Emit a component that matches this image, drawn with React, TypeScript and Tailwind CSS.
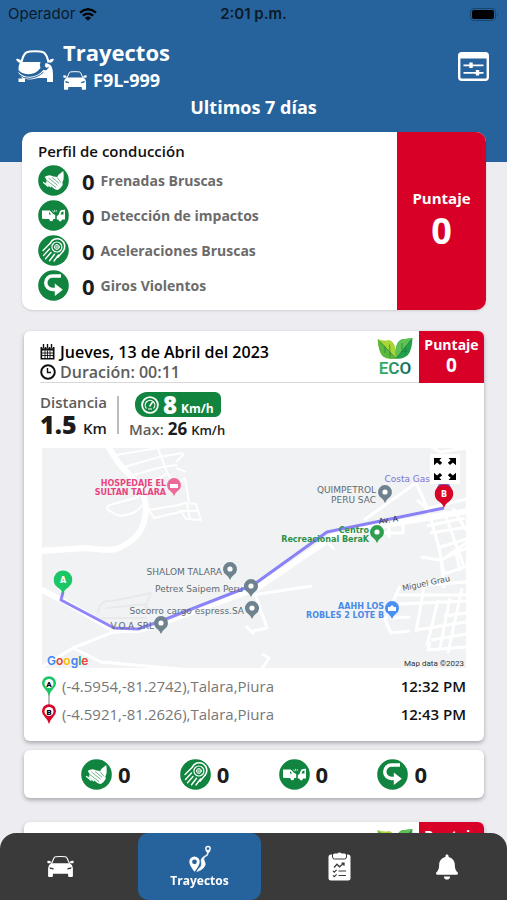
import { type ReactNode, useId } from "react";
import { FaBell } from "react-icons/fa";

type EventKind = "brake" | "impact" | "acceleration" | "turn";

type Trip = {
  id: number;
  date: string;
  duration: string;
  score: number;
  distance: string;
  speed: number;
  maxSpeed: number;
  from: { place: string; time: string };
  to: { place: string; time: string };
  events: { kind: EventKind; count: number }[];
};

const PROFILE: { kind: EventKind; label: string; count: number }[] = [
  { kind: "brake", label: "Frenadas Bruscas", count: 0 },
  { kind: "impact", label: "Detección de impactos", count: 0 },
  { kind: "acceleration", label: "Aceleraciones Bruscas", count: 0 },
  { kind: "turn", label: "Giros Violentos", count: 0 },
];

const LAST_TRIP: Trip = {
  id: 1,
  date: "Jueves, 13 de Abril del 2023",
  duration: "00:11",
  score: 0,
  distance: "1.5",
  speed: 8,
  maxSpeed: 26,
  from: { place: "(-4.5954,-81.2742),Talara,Piura", time: "12:32 PM" },
  to: { place: "(-4.5921,-81.2626),Talara,Piura", time: "12:43 PM" },
  events: [
    { kind: "brake", count: 0 },
    { kind: "acceleration", count: 0 },
    { kind: "impact", count: 0 },
    { kind: "turn", count: 0 },
  ],
};

const TRIPS: Trip[] = [LAST_TRIP, { ...LAST_TRIP, id: 2 }];

function CarIcon({ className }: { className: string }) {
  return (
    <svg viewBox="0 0 27 21" className={className} fill="currentColor" aria-hidden="true">
      <path d="M4.4 7.800 7 2Q7.500.9 8.700.8q4.800-.5 9.600 0 1.200.1 1.700 1.200l2.600 5.800" fill="none" stroke="currentColor" strokeWidth="1.100" />
      <path d="M.2 5q2-.8 4 .7l-.8 1.600H.7zM26.800 5q-2-.8-4 .7l.8 1.600h2.700z" />
      <path
        fillRule="evenodd"
        d="M4 7.200h19q2.600 1.500 2.900 4.700v8.200q0 .8-.8.8h-3.200q-.8 0-.8-.8v-2.300H5.900v2.300q0 .8-.8.800H1.900q-.8 0-.8-.8v-8.200q.3-3.200 2.900-4.700zM2.400 11.200l.7 1.900 4 .5-1-1.700zM24.600 11.200l-.7 1.900-4 .5 1-1.700z"
      />
    </svg>
  );
}

function LogoIcon() {
  return (
    <svg viewBox="0 0 38 34" className="h-[34px] w-[38px] shrink-0" aria-hidden="true">
      <path d="M5.500 13.500Q7 6 10 3.600 13 2.200 19 2.200t9 1.400q3 2.400 4.500 9.900" fill="none" stroke="#fff" strokeWidth="2" />
      <path d="M0 10q2.500-1 5 1.200L4.500 14Q1 13.500 0 10zM38 10q-2.500-1-5 1.200l.5 2.800q3.500-.5 4.500-4z" fill="#fff" />
      <path d="M4 13h20.500q-1.500 3.500 0 6-5 6.500-12.500 6.200-6.500-.3-9.500-4.200 0-5 1.500-8z" fill="#fff" />
      <path d="M1.800 22.500q5 5.500 12 5.300 8-.2 13.500-6.800l3 .3 3-3.300-3 .7-1.600-1.700.8-3q4.500.5 6 3.500 1.500 3 1.500 8v7.500h-6v-4h-9q-7 2.500-13 .8v3.200H2.500v-3.500l4-.1Q3.500 26.500 1.800 22.500z" fill="#fff" />
      <path d="M2 25q5.500 5 12 4.300 8-.8 13.500-6.300" fill="none" stroke="#26639c" strokeWidth="1" />
    </svg>
  );
}

function FilterIcon() {
  return (
    <svg viewBox="0 0 31 29" className="h-[29px] w-[31px]" fill="none" stroke="#fff" aria-hidden="true">
      <rect x="1.200" y="1.200" width="28.600" height="26.600" rx="2.500" strokeWidth="2.400" />
      <path d="M1.500 4h28" strokeWidth="5" />
      <path d="M5.500 13.300h20M5.500 20.800h20" strokeWidth="1.800" />
      <path d="M13 10.500v5.600M19.500 18v5.600" strokeWidth="3.400" />
    </svg>
  );
}

const EVENT_DRAWINGS: Record<EventKind, ReactNode> = {
  brake: (
    <g>
      <path d="M6.800 11.800q2-1.500 5-1.600l4 1.300 3.500.4 1-2 5-4q.6 3.500.3 7.500-.3 2.500-1.200 3.500l.3 3q-1.700 3-4.800 5.200l-3.200-.8-8-6.500q-.7-2-.4-3z" fill="#fff" />
      <path d="M7.500 14.500l10.500 8M10.500 13l9 7.200M14 12.500l7 5.700M19 12.500l4 5" stroke="#11853f" strokeWidth=".6" />
      <path d="M5.500 17.500l4.500 3.800M8.200 18l4.500 3.800" stroke="#fff" strokeWidth="1.200" strokeLinecap="round" />
    </g>
  ),
  impact: (
    <g fill="#fff">
      <path fillRule="evenodd" d="M4 10.500h7.800l3.400 3.600 2 1v4h-1.800a2.200 2.200 0 0 1-4.300 0H8.500L4 18.800zM11 12v2.500h2.300z" />
      <path fillRule="evenodd" d="M27 9.700q-4.500-.3-5.400 2.300l-1 2.700-1.800 1.500v3.200h1.500a1.900 1.900 0 0 0 3.700 0h3zM25.500 11.500v3h-3l.8-2q.7-1.100 2.200-1z" />
      <circle cx="13.300" cy="19.700" r="1.600" />
      <circle cx="22.200" cy="20" r="1.400" />
      <path d="M14.500 10.700l1 1.600M16.600 9.800v2M18.600 10.300l-.6 1.500" stroke="#fff" strokeWidth=".8" />
    </g>
  ),
  acceleration: (
    <g fill="none" stroke="#fff" strokeLinecap="round">
      <path d="M12.200 8.300A7.600 7.600 0 1 1 25 16.200" strokeWidth="1.600" />
      <circle cx="18.900" cy="12" r="5" strokeWidth="1.200" />
      <circle cx="18.900" cy="12" r="2.400" strokeWidth="1" />
      <path d="M18.900 9.500v5M16.400 12h5" strokeWidth=".7" />
      <path d="M12 8.500L5 15.500M11.500 14l-6 6.500M13 17.500l-5.500 6.200M16.500 19.200l-5 6.500M20.500 20l-4.500 6M25 16.200l-5 6" strokeWidth="1.400" />
    </g>
  ),
  turn: (
    <g>
      <path d="M23 6H14.500a6.600 6.600 0 0 0 0 13.500H18" fill="none" stroke="#fff" strokeWidth="3.500" />
      <path d="M16.800 13.500l8 6.300-8 6.300z" fill="#fff" />
    </g>
  ),
};

function EventIcon({ kind }: { kind: EventKind }) {
  return (
    <svg viewBox="0 0 31 31" className="size-[31px] shrink-0" aria-hidden="true">
      <circle cx="15.500" cy="15.500" r="15.300" fill="#11853f" />
      {EVENT_DRAWINGS[kind]}
    </svg>
  );
}

function EcoBadge() {
  const gradient = useId();
  return (
    <svg viewBox="0 0 36 40" className="h-10 w-9 shrink-0" role="img" aria-label="ECO">
      <defs>
        <linearGradient id={gradient} x1="0" x2="1">
          <stop offset="0" stopColor="#39b56a" />
          <stop offset="1" stopColor="#0f6a58" />
        </linearGradient>
      </defs>
      <path d="M.7 2Q7 4.500 12 3q8 2.500 7 18.500Q11 23.500 5.500 19 1.500 14.500.7 2z" fill="#a9d636" />
      <path d="M.7 2Q1.500 14.500 5.500 19 11 23.500 19 21.500z" fill="#5cb83c" />
      <path d="M35.500 1Q30 2 25 2.300 17 5.500 19 21.500q7 1 12-3.500Q35 13 35.500 1z" fill="#22a04c" />
      <path d="M35.500 1Q30 2 25 2.300 17 5.500 19 21.500z" fill="#5fc053" />
      <path d="M3 4.500l16 17L34 3M8 9.500V16M13 14.800v5M13 14.500l-.5-7M28.500 9.500l-.5 8M24 14.500l7-.5M25 13V6" fill="none" stroke="#1b7a3d" strokeWidth=".7" />
      <text x="18" y="37" textAnchor="middle" fontFamily="Roboto, sans-serif" fontSize="17" fontWeight="600" fill={`url(#${gradient})`}>
        ECO
      </text>
    </svg>
  );
}

function CalendarIcon() {
  return (
    <svg viewBox="0 0 15 16" className="h-4 w-[15px]" aria-hidden="true">
      <path d="M.5 3h14v12.500H.5z" fill="#111" />
      <path d="M3.500.3v4M7.500.3v4M11.500.3v4" stroke="#fff" strokeWidth="2.600" />
      <path d="M3.500 0v4M7.500 0v4M11.500 0v4" stroke="#111" strokeWidth="1.400" />
      <path d="M2.200 6.500h10.600v7.500H2.200z" fill="#fff" />
      <path d="M2 9h11M2 11.500h11M5 6.500V14M7.500 6.500V14M10 6.500V14" stroke="#111" strokeWidth=".9" />
    </svg>
  );
}

function ClockIcon() {
  return (
    <svg viewBox="0 0 16 16" className="size-4" fill="none" stroke="#111" aria-hidden="true">
      <circle cx="8" cy="8" r="6.800" strokeWidth="2" />
      <path d="M7.500 4v4.500h3.500" strokeWidth="1.400" />
    </svg>
  );
}

function GaugeIcon() {
  return (
    <svg viewBox="0 0 18 18" className="size-[18px]" fill="none" stroke="#fff" aria-hidden="true">
      <circle cx="9" cy="9" r="7.900" strokeWidth="1.800" />
      <path d="M5.500 12.500a4.800 4.800 0 1 1 7 0" strokeWidth="1.200" />
      <path d="M8.500 10.500l3-4.500" strokeWidth="1.500" />
      <path d="M7 13h4" strokeWidth="1.200" />
    </svg>
  );
}

function RouteIcon() {
  return (
    <svg viewBox="0 0 24 28" className="h-7 w-6" aria-hidden="true">
      <path fillRule="evenodd" d="M6.500 11.500a5.200 5.200 0 0 1 5.200 5.200q0 3.500-5.200 10-5.200-6.500-5.200-10a5.200 5.200 0 0 1 5.200-5.200zm0 2.900a2.400 2.400 0 1 0 0 4.800 2.400 2.400 0 0 0 0-4.800z" fill="#fff" />
      <path fillRule="evenodd" d="M20 .8a2.900 2.900 0 0 1 2.900 2.900Q22.900 5.700 20 9q-2.900-3.300-2.900-5.300A2.900 2.900 0 0 1 20 .8zm0 1.500a1.400 1.400 0 1 0 0 2.800 1.400 1.400 0 0 0 0-2.800z" fill="#fff" />
      <path d="M20 8.500q.2 2-2.200 3-3.300 1.700-1.500 4.500 2.500 3.600-1 7-2.500 2.600-6.500 3.600l1.800-2.800q3.700-2.600 2.900-5.800-1.500-4.500 2.600-6.600Q19.200 10 19.200 8.500z" fill="#fff" stroke="#fff" strokeWidth=".6" />
    </svg>
  );
}

function ReportIcon() {
  return (
    <svg viewBox="0 0 23 29" className="h-[29px] w-[23px]" aria-hidden="true">
      <rect x=".5" y="2.500" width="22" height="26" rx="2.500" fill="#fff" />
      <path d="M4.500 2v3q0 2 2 2h10q2 0 2-2V2z" fill="#fff" stroke="#3a3a3a" strokeWidth="1" />
      <path d="M5 3.200q0-1.700 1.700-1.700h2.600q2.200-2 4.400 0h2.600q1.700 0 1.700 1.700v1.600H5z" fill="#fff" />
      <path d="M6 15.500l3-3.200 2.500 2.500 4-3.300M13.500 11.200h2.500v2.500" fill="none" stroke="#3a3a3a" strokeWidth="1.300" />
      <path d="M10.500 19h7.500M10.500 23.500h7.500M5 18.800l1.300 1.300 2.300-2.300M5 23.300l1.300 1.300 2.300-2.300" fill="none" stroke="#3a3a3a" strokeWidth="1.200" />
    </svg>
  );
}

function StatusBar() {
  return (
    <div className="grid h-7 grid-cols-3 items-center px-2 font-['Inter',sans-serif] text-[15px] leading-5 text-[#0b1a28]">
      <div className="flex items-center gap-1">
        <span>Operador</span>
        <svg viewBox="0 0 18 13" className="h-[13px] w-[18px]" fill="none" stroke="#000" aria-hidden="true">
          <path d="M1 4.600q8-6.800 16 0" strokeWidth="2.300" />
          <path d="M3.800 7.700q5.200-4.300 10.400 0" strokeWidth="2.200" />
          <path d="M9 12.800L5.900 9.700q3.100-2.400 6.200 0z" fill="#000" stroke="none" />
        </svg>
      </div>
      <span className="text-center font-semibold">2:01 p.m.</span>
      <svg viewBox="0 0 29 13" className="h-[13px] w-[29px] justify-self-end" aria-hidden="true">
        <rect x=".5" y=".5" width="25" height="12" rx="3.500" fill="none" stroke="#1a456d" />
        <rect x="2" y="2" width="22" height="9" rx="2" fill="#000" />
        <path d="M27 4.500q1.500 2 0 4z" fill="#1a456d" />
      </svg>
    </div>
  );
}

function MapPin({ x, y, color, glyph }: { x: number; y: number; color: string; glyph?: ReactNode }) {
  return (
    <g>
      <path d={`M${x} ${y + 10}q-1-3-4-5.200a7 7 0 1 1 8 0q-3 2.200-4 5.200z`} fill={color} />
      {glyph ?? <circle cx={x} cy={y - 1} r="2.600" fill="#fff" />}
    </g>
  );
}

function EndPin({ x, y, color, letter }: { x: number; y: number; color: string; letter: string }) {
  return (
    <g>
      <path d={`M${x} ${y + 13}q-1-4-5.500-6.800a9.300 9.300 0 1 1 11 0q-4.500 2.800-5.500 6.800z`} fill={color} />
      <text x={x} y={y + 2} textAnchor="middle" fontSize="8" fontWeight="700" fill="#fff">
        {letter}
      </text>
    </g>
  );
}

function RouteMap() {
  return (
    <div className="relative h-[220px] overflow-hidden bg-[#f0f2f3]">
      <svg viewBox="0 0 424 220" preserveAspectRatio="xMidYMid slice" className="h-full w-full" fontFamily="'DejaVu Sans', sans-serif" fontSize="8">
        <g fill="none" stroke="#fff" strokeLinejoin="round">
          <path d="M66-2q8 14 13 20 12 12 18 20 6 10 7 22 0 16-8 26-8 10-22 15-8 2-30-1l-46 3" strokeWidth="6" />
          <path d="M-2 141l22 11 52 30h24l24-7 95-35 80-54 48-9 83-14" strokeWidth="6" />
          <path d="M0 219l31-19 38-15 28-3M31 200l28 14 90 8" strokeWidth="3" />
          <path d="M74 7l48-8M79 20l38-11 24-4M88 28l32-9 15-2M96 39l23-10 6-4M115-2l10 26 8 14M142 6l-8 8M134 20l10 4" strokeWidth="2" />
          <path d="M97 49l-26 7q-8 2-5 6l9 5q6 2 18-3l8-7M107 62l30-5 6-2 11 1 5 16-15-1-5-8M107 62l5 8 26-6M137 63h18M145 56l3 15M133 38l10-8 4 24" strokeWidth="2" />
          <path d="M56 165q2-14 14-12l39-8-6 14 12 6M59 170h46M64 160l42-4" stroke="#e7e9ea" strokeWidth="2" />
          <path d="M322 72l52-37 12 26 11 39 5 26M382 61l43-10M385 78l38-8M388 85l38-6M395 100l30-9M375 52l10 8M347 76v14M330 85h31v-8M283 92l9 9" strokeWidth="3" />
          <path d="M379 109l19 3 26-12M400 112l24-17M402 63l20 56M411 60l13 22M402 126l24-8M399 112l3 28M414 105l4 18" strokeWidth="3" />
          <path d="M358 138l-15 34 6 13 19-2M352 147h74M357 156l68-3M371 138l54-4M348 170l20-1M383 134l-9 50M396 152l-11 46M408 150l-10 50M420 140l-14 65M374 182l50-8M389 192l35-6M388 194l-2 8 38-3M402 168l23-3" strokeWidth="3" />
          <path d="M210 147l60-9M213 146l12 34-14 3M204 178l8 8M220 206l7 4-8 12M388-2l10 6 26-4" strokeWidth="3" />
        </g>
        <path d="M21 144l-2 8 53 28 24 1 23-8 92-36 74-53 117-24" fill="none" stroke="#4a3cf5" strokeOpacity=".62" strokeWidth="3" strokeLinejoin="round" />
        <g fontWeight="700" textAnchor="end">
          <g fill="#e8457f">
            <text x="124" y="38">HOSPEDAJE EL</text>
            <text x="124" y="47">SULTAN TALARA</text>
          </g>
          <g fill="#2a9147">
            <text x="327" y="85">Centro</text>
            <text x="327" y="94">Recreacional BeraK</text>
          </g>
          <g fill="#4a8ae8">
            <text x="342" y="161">AAHH LOS</text>
            <text x="342" y="170">ROBLES 2 LOTE B</text>
          </g>
        </g>
        <g fill="#5f6b74" fontSize="9" textAnchor="end">
          <text x="180" y="127">SHALOM TALARA</text>
          <text x="201" y="144">Petrex Saipem Peru</text>
          <text x="202" y="166">Socorro cargo espress.SA</text>
          <text x="112" y="181">V.O.A SRL</text>
          <text x="334" y="45">QUIMPETROL</text>
          <text x="334" y="55">PERU SAC</text>
          <text x="388" y="34" fill="#7d74d6">Costa Gas</text>
        </g>
        <text x="337" y="76" fill="#333" transform="rotate(-8 337 76)">Av. A</text>
        <text x="361" y="143" fill="#555" transform="rotate(-12 361 143)">Miguel Grau</text>
        <MapPin x={132} y={38} color="#ee6a98" glyph={<path d="M128 36h8v4h-8z" fill="#fff" />} />
        <MapPin x={188} y={122} color="#6f838e" />
        <MapPin x={209} y={139} color="#6f838e" />
        <MapPin x={210} y={161} color="#6f838e" />
        <MapPin x={119} y={176} color="#6f838e" />
        <MapPin x={343} y={45} color="#6f838e" />
        <MapPin x={335} y={85} color="#2f9e4f" />
        <MapPin x={350} y={161} color="#4a90f2" glyph={<path d="M346 163v-4h2l2-2 2 2h2v4z" fill="#fff" />} />
        <MapPin x={402} y={42} color="#6f6cd0" />
        <EndPin x={21} y={133} color="#19c766" letter="A" />
        <EndPin x={402} y={47} color="#d90429" letter="B" />
        <text x="5" y="217" fontFamily="Inter, sans-serif" fontSize="12" fontWeight="600">
          <tspan fill="#4285f4">G</tspan>
          <tspan fill="#ea4335">o</tspan>
          <tspan fill="#fbbc05">o</tspan>
          <tspan fill="#4285f4">g</tspan>
          <tspan fill="#34a853">l</tspan>
          <tspan fill="#ea4335">e</tspan>
        </text>
        <text x="422" y="218" fontFamily="Roboto, sans-serif" fill="#333" textAnchor="end">Map data ©2023</text>
      </svg>
      <button type="button" aria-label="Ampliar mapa" className="absolute top-1.5 right-1.5 flex size-[30px] items-center justify-center bg-white">
        <svg viewBox="0 0 24 24" className="size-6" aria-hidden="true">
          <path d="M1 1h7.500L6.300 3.200l2.900 2.600-2.200 2.300-2.900-2.700L1 8.200zM23 1v7.200l-3.100-2.800L17 8.100l-2.200-2.300 2.900-2.600L15.500 1zM1 23v-7.200l3.100 2.800L7 15.900l2.200 2.300-2.900 2.600L8.500 23zM23 23h-7.500l2.200-2.200-2.900-2.600 2.200-2.300 2.900 2.700 3.100-2.800z" fill="#000" />
        </svg>
      </button>
    </div>
  );
}

function TripEnds({ trip }: { trip: Trip }) {
  return (
    <div className="flex gap-1.5 pt-1 pb-[13px]">
      <svg viewBox="0 0 14 56" className="h-14 w-3.5 shrink-0" fontFamily="Roboto, sans-serif" fontSize="8" fontWeight="900" textAnchor="middle" aria-hidden="true">
        <path d="M7 22v15" stroke="#777" />
        <path d="M7 24q-1-4-4.500-7.500a7 7 0 1 1 9 0Q8 20 7 24z" fill="#19c766" />
        <circle cx="7" cy="11.500" r="4.500" fill="#fff" />
        <path d="M7 52q-1-4-4.500-7.500a7 7 0 1 1 9 0Q8 48 7 52z" fill="#d90429" />
        <circle cx="7" cy="39.500" r="4.500" fill="#fff" />
        <text x="7" y="14.500">A</text>
        <text x="7" y="42.500">B</text>
      </svg>
      <ul className="flex-1 text-[15px] leading-7">
        {[trip.from, trip.to].map((end) => (
          <li key={end.time} className="flex justify-between">
            <span className="text-[#777]">{end.place}</span>
            <span className="font-semibold text-[#111]">{end.time}</span>
          </li>
        ))}
      </ul>
    </div>
  );
}

function TripCard({ trip, open }: { trip: Trip; open: boolean }) {
  return (
    <article className="mb-6">
      <div className="overflow-hidden rounded-md bg-white shadow-[0_2px_4px_rgba(0,0,0,0.3)]">
        <div className="flex">
          <div className="ml-4 flex flex-1 justify-between border-b border-[#d8d8d8] pr-1.5">
            <div className="pt-[11px] text-[16px] leading-5 font-semibold">
              <h2 className="flex items-center gap-[5px] text-black">
                <CalendarIcon />
                {trip.date}
              </h2>
              <p className="flex items-center gap-1 text-[#5c5c5c]">
                <ClockIcon />
                Duración: {trip.duration}
              </p>
            </div>
            <div className="pt-1.5">
              <EcoBadge />
            </div>
          </div>
          <div className="w-[65px] bg-[#d80027] pt-1 text-center font-bold text-white">
            <p className="text-[14px] leading-5">Puntaje</p>
            <p className="text-[19px] leading-5">{trip.score}</p>
          </div>
        </div>

        {open && (
          <>
            <div className="flex h-[65px] pt-[9px] pl-4">
              <div className="font-semibold">
                <p className="text-[15px] leading-5 text-[#5c5c5c]">Distancia</p>
                <p className="text-[25px] leading-6 font-extrabold text-[#1c1c1c]">
                  {trip.distance} <span className="text-[15px] font-semibold">Km</span>
                </p>
              </div>
              <div className="mt-1 ml-2.5 h-[38px] w-0.5 bg-[#bbb]" />
              <div className="ml-2.5 font-semibold">
                <p className="ml-1.5 flex h-[25px] w-[86px] items-center gap-1 rounded-l-[12px] rounded-r-md bg-[#11853f] pl-1.5 text-white">
                  <GaugeIcon />
                  <span className="text-[24px] leading-6 font-extrabold">{trip.speed}</span>
                  <span className="pt-2 text-[12px] leading-4 font-bold">Km/h</span>
                </p>
                <p className="text-[15px] leading-6 text-[#5c5c5c]">
                  Max: <span className="text-[17px] font-bold text-[#1c1c1c]">{trip.maxSpeed}</span>{" "}
                  <span className="text-[13px] text-[#222]">Km/h</span>
                </p>
              </div>
            </div>

            <div className="px-[18px]">
              <RouteMap />
              <TripEnds trip={trip} />
            </div>
          </>
        )}
      </div>

      {open && (
        <ul className="mt-[9px] flex h-12 items-center justify-between rounded-md bg-white px-[57px] shadow-[0_2px_4px_rgba(0,0,0,0.3)]">
          {trip.events.map((e) => (
            <li key={e.kind} className="flex items-center gap-1.5 text-[22px] leading-8 font-bold text-[#1c1c1c]">
              <EventIcon kind={e.kind} />
              {e.count}
            </li>
          ))}
        </ul>
      )}
    </article>
  );
}

export default function App() {
  return (
    <div className="h-screen overflow-hidden bg-[#edecf1] font-['Open_Sans',sans-serif]">
      <div className="h-full overflow-y-auto pb-16 [scrollbar-width:none]">
        {/* Header */}
        <header className="bg-[#26639c] pb-[42px] text-white">
          <StatusBar />
          <div className="flex items-center pt-2.5 pr-[18px] pl-4">
            <LogoIcon />
            <div className="ml-[9px] flex-1 font-bold">
              <h1 className="text-[22px] leading-7">Trayectos</h1>
              <p className="flex items-center gap-1.5 text-[18px] leading-7">
                <CarIcon className="h-[19px] w-6" />
                F9L-999
              </p>
            </div>
            <button type="button" aria-label="Filtrar">
              <FilterIcon />
            </button>
          </div>
          <p className="text-center text-[18px] leading-[26px] font-bold">Ultimos 7 días</p>
        </header>

        {/* Driving profile */}
        <section className="relative mt-[-30px] mr-[21px] ml-[22px] flex overflow-hidden rounded-[10px] bg-white shadow-sm">
          <div className="flex-1 pt-2 pb-[7px] pl-4">
            <h2 className="text-[15px] leading-[22px] font-semibold text-[#111]">Perfil de conducción</h2>
            <ul className="mt-px font-bold">
              {PROFILE.map((p) => (
                <li key={p.kind} className="flex h-[35px] items-center">
                  <EventIcon kind={p.kind} />
                  <span className="ml-[13px] text-[22px] leading-8 text-[#1c1c1c]">{p.count}</span>
                  <span className="ml-1.5 text-[14px] leading-5 text-[#6b6b6b]">{p.label}</span>
                </li>
              ))}
            </ul>
          </div>
          <div className="flex w-[89px] flex-col items-center justify-center bg-[#d80027] font-bold text-white">
            <p className="text-[15px] leading-5">Puntaje</p>
            <p className="text-[36px] leading-[46px]">0</p>
          </div>
        </section>

        {/* Trips */}
        <main className="mt-[21px] mr-[23px] ml-6">
          {TRIPS.map((t, i) => (
            <TripCard key={t.id} trip={t} open={i === 0} />
          ))}
        </main>
      </div>

      {/* Tab bar */}
      <nav className="fixed inset-x-0 bottom-0 flex h-[67px] rounded-t-2xl bg-[#3a3a3a] px-1.5 text-white">
        <a href="#vehiculos" aria-label="Vehículos" className="flex flex-1 items-center justify-center">
          <CarIcon className="h-[21px] w-[27px]" />
        </a>
        <a href="#trayectos" aria-current="page" className="mx-6 flex w-[123px] flex-col items-center justify-center rounded-[10px] bg-[#26639c] text-[12px] leading-4 font-bold">
          <RouteIcon />
          Trayectos
        </a>
        <a href="#reportes" aria-label="Reportes" className="flex flex-1 items-center justify-center">
          <ReportIcon />
        </a>
        <a href="#alertas" aria-label="Alertas" className="flex flex-1 items-center justify-center">
          <FaBell className="h-7 w-[22px]" />
        </a>
      </nav>
    </div>
  );
}
